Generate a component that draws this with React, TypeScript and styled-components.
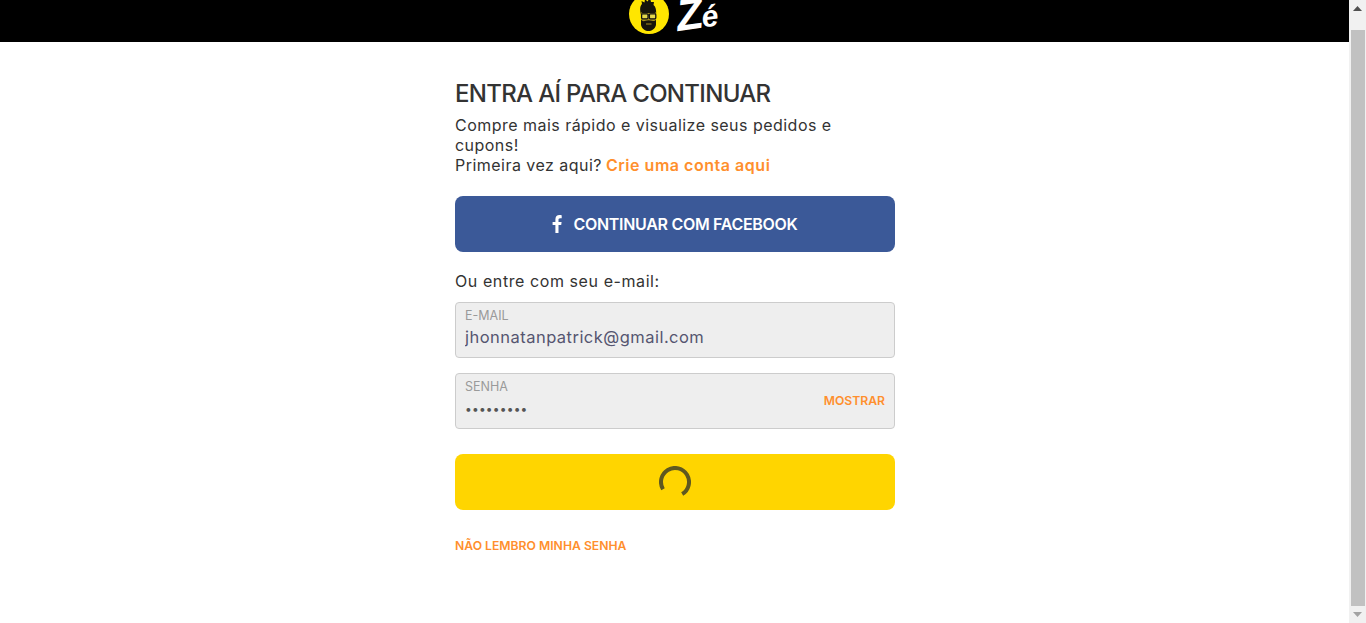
import React from "react";
import styled, { createGlobalStyle } from "styled-components";

const Global = createGlobalStyle`
  html, body { margin: 0; padding: 0; height: 100%; overflow: hidden; background: #fff; }
  #root { height: 100%; }
  * { box-sizing: border-box; }
  body { font-family: Inter, "Liberation Sans", sans-serif; color: #333; }
`;

const Viewport = styled.div`
  display: flex;
  height: 623px;
  width: 1366px;
`;
const Page = styled.div`
  flex: 1;
  min-width: 0;
  display: flex;
  flex-direction: column;
`;
const Header = styled.header`
  height: 42px;
  background: #000;
  display: flex;
  justify-content: center;
  align-items: flex-start;
  gap: 7px;
  overflow: hidden;
`;
const Mascot = styled.svg`
  width: 40px;
  height: 40px;
  margin-top: -6px;
  flex: none;
`;
const Wordmark = styled.span`
  font-family: "Liberation Sans", sans-serif;
  font-weight: 700;
  font-style: italic;
  font-size: 44px;
  line-height: 30px;
  height: 30px;
  width: 44px;
  color: #fff;
  letter-spacing: -2px;
  white-space: nowrap;
  transform: rotate(-8deg);
  margin-top: -2px;
`;
const WordmarkSmall = styled.span`
  font-size: 30px;
  letter-spacing: 0;
`;
const Main = styled.main`
  width: 440px;
  margin: 0 0 0 455px;
  padding-top: 37px;
`;
const Title = styled.h1`
  margin: 0;
  font-size: 24px;
  line-height: 30px;
  font-weight: 500;
  color: #333;
  letter-spacing: -0.68px;
`;
const Intro = styled.p`
  margin: 6px 0 0;
  font-size: 16px;
  line-height: 20px;
  font-weight: 400;
  color: #333;
  width: 400px;
  letter-spacing: 0.47px;
`;
const AccentLink = styled.a`
  color: #ff8f2d;
  font-weight: 600;
  text-decoration: none;
  letter-spacing: 0.53px;
  margin-left: -1px;
`;
const Button = styled.button<{ $bg: string }>`
  display: flex;
  align-items: center;
  justify-content: center;
  gap: 11px;
  width: 100%;
  height: 56px;
  border: 0;
  border-radius: 8px;
  background: ${(p) => p.$bg};
  padding: 0;
  color: #fff;
  font-family: inherit;
  font-size: 16px;
  font-weight: 600;
`;
const FacebookButton = styled(Button)`
  margin-top: 21px;
  letter-spacing: -0.3px;
`;
const SubmitButton = styled(Button)`
  margin-top: 25px;
`;
const Divider = styled.p`
  margin: 19px 0 0;
  font-size: 16px;
  line-height: 20px;
  color: #333;
  letter-spacing: 0.58px;
`;
const Field = styled.label<{ $top: number }>`
  display: block;
  position: relative;
  height: 56px;
  margin-top: ${(p) => p.$top}px;
  background: #eee;
  border: 1px solid #ccc;
  border-radius: 4px;
  padding: 5px 9px 0 9px;
`;
const FieldLabel = styled.span`
  display: block;
  font-size: 12.5px;
  line-height: 16px;
  color: #9a9a9a;
`;
const FieldInput = styled.input`
  display: block;
  width: 340px;
  border: 0;
  outline: 0;
  padding: 0;
  margin-top: 2px;
  background: transparent;
  font-family: inherit;
  font-size: 16.5px;
  line-height: 22px;
  height: 22px;
  color: #555570;
  letter-spacing: 0.47px;
`;
const PasswordInput = styled(FieldInput)`
  font-size: 12px;
  letter-spacing: 0.2px;
  color: #555;
  margin-top: 3px;
`;
const Reveal = styled.span`
  position: absolute;
  right: 9px;
  top: 18px;
  font-size: 12.2px;
  line-height: 18px;
  font-weight: 600;
  color: #ff8f2d;
`;
const ForgotLink = styled(AccentLink)`
  display: block;
  margin: 27px 0 0;
  font-size: 12.2px;
  line-height: 18px;
  font-weight: 600;
  letter-spacing: 0;
`;
const Scrollbar = styled.div`
  width: 17px;
  flex: none;
  height: 100%;
  background: #f1f1f1;
  display: flex;
  flex-direction: column;
  justify-content: space-between;
`;
const ScrollTrack = styled.div`
  flex: 1;
`;
const ScrollArrow = styled.div`
  height: 17px;
  display: flex;
  align-items: center;
  justify-content: center;
  flex: none;
`;
const ScrollThumb = styled.div`
  margin: 13px 1px 0 2px;
  height: 576px;
  background: #c1c1c1;
`;

export default function App() {
  return (
    <Viewport>
      <Global />
      <Page>
        <Header>
          <Mascot viewBox="0 0 40 40" aria-hidden="true">
            <circle cx="20" cy="20" r="20" fill="#ffe600" />
            <path
              d="M12 21 C10.5 16 11 12 13 10 L12.5 7 L15.5 8.5 L16 5 L18.5 7.5 L21 3.5 L22 8 L25 8 L24.5 11 C27 13 27.5 17 27 21 Z"
              fill="#17150b"
            />
            <path d="M12.5 18 H26.5 V28 H12.5 Z" fill="#a8921f" />
            <path d="M13 17 C16 15.5 23 15.5 26 17 L26 19 H13 Z" fill="#17150b" />
            <rect x="12.6" y="19.8" width="6.4" height="5" rx="1" fill="#e4d84c" stroke="#111" strokeWidth="1.3" />
            <rect x="20.4" y="19.8" width="6.4" height="5" rx="1" fill="#e4d84c" stroke="#111" strokeWidth="1.3" />
            <path d="M19 21 H20.4" stroke="#111" strokeWidth="1.2" />
            <path
              d="M12 25 C13 27.5 15 27.5 16.5 26.8 C18 26 21 26 23 26.8 C25 27.5 26.5 27 27 25 L27 31 C26 35 22.5 37 19.5 37 C16.5 37 13 35 12 31 Z"
              fill="#17150b"
            />
            <path d="M17 30 H22.5" stroke="#a8921f" strokeWidth="1" />
          </Mascot>
          <Wordmark>
            Z<WordmarkSmall>é</WordmarkSmall>
          </Wordmark>
        </Header>
        <Main>
          <Title>ENTRA AÍ PARA CONTINUAR</Title>
          <Intro>
            Compre mais rápido e visualize seus pedidos e cupons!
            <br />
            Primeira vez aqui? <AccentLink href="#">Crie uma conta aqui</AccentLink>
          </Intro>
          <FacebookButton $bg="#3b5998" type="button">
            <svg width="10" height="18" viewBox="0 0 10 18" aria-hidden="true">
              <path
                d="M6.5 18 V10 H9.2 L9.6 7 H6.5 V5 C6.5 4 6.8 3.3 8.1 3.3 H9.7 V0.2 C9.4 0.1 8.5 0 7.4 0 C5 0 3.4 1.4 3.4 4.3 V7 H0.6 V10 H3.4 V18 Z"
                fill="#fff"
              />
            </svg>
            CONTINUAR COM FACEBOOK
          </FacebookButton>
          <Divider>Ou entre com seu e-mail:</Divider>
          <Field $top={11}>
            <FieldLabel>E-MAIL</FieldLabel>
            <FieldInput type="email" readOnly value="jhonnatanpatrick@gmail.com" />
          </Field>
          <Field $top={15}>
            <FieldLabel>SENHA</FieldLabel>
            <PasswordInput type="password" readOnly value="123456789" />
            <Reveal>MOSTRAR</Reveal>
          </Field>
          <SubmitButton $bg="#ffd500" type="button" aria-label="Carregando">
            <svg width="32" height="32" viewBox="0 0 32 32" aria-hidden="true">
              <path d="M4 23.2 A14 14 0 1 1 23.2 28" fill="none" stroke="#5f5820" strokeWidth="4" />
            </svg>
          </SubmitButton>
          <ForgotLink href="#">NÃO LEMBRO MINHA SENHA</ForgotLink>
        </Main>
      </Page>
      <Scrollbar>
        <ScrollArrow>
          <svg width="9" height="5" viewBox="0 0 9 5" aria-hidden="true">
            <path d="M4.5 0 L9 5 H0 Z" fill="#505050" />
          </svg>
        </ScrollArrow>
        <ScrollThumb />
        <ScrollTrack />
        <ScrollArrow>
          <svg width="9" height="5" viewBox="0 0 9 5" aria-hidden="true">
            <path d="M0 0 H9 L4.5 5 Z" fill="#a3a3a3" />
          </svg>
        </ScrollArrow>
      </Scrollbar>
    </Viewport>
  );
}
